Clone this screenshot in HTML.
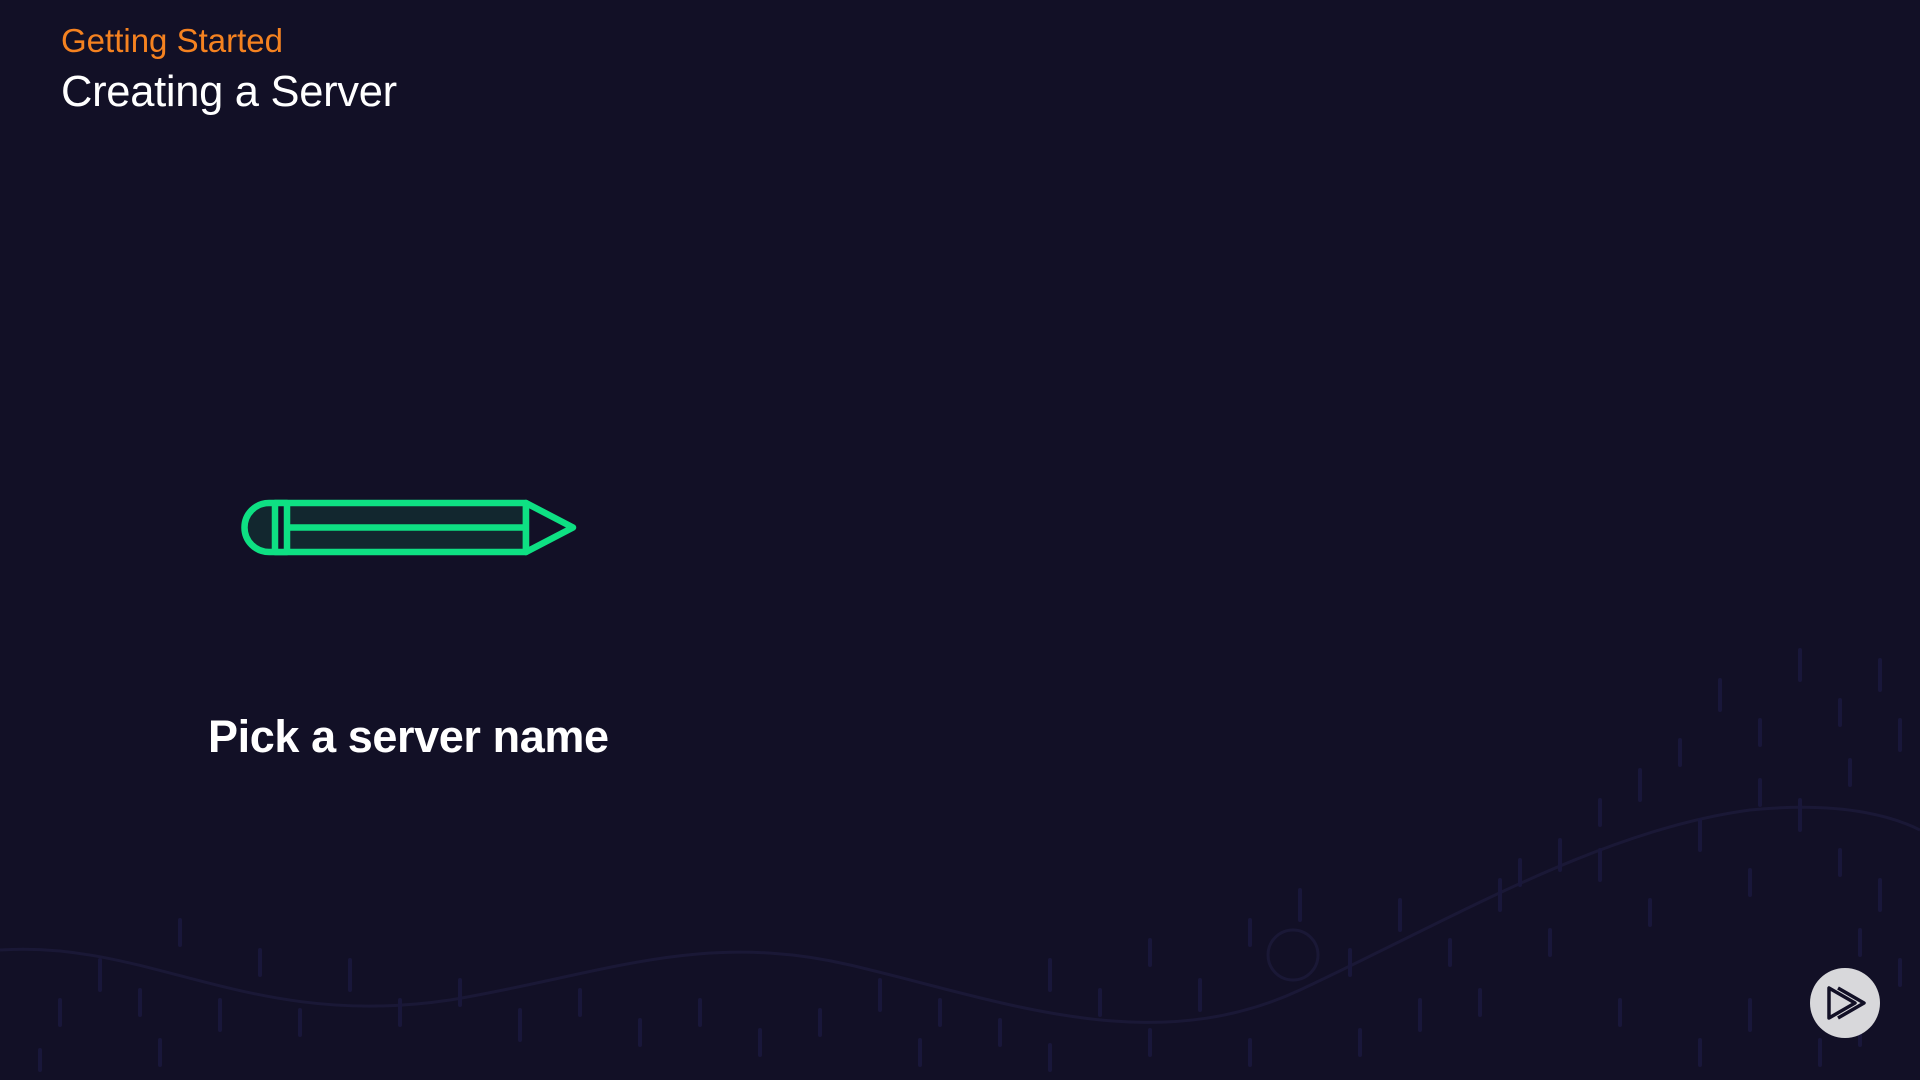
<!DOCTYPE html>
<html><head><meta charset="utf-8"><style>
html,body{margin:0;padding:0;width:1920px;height:1080px;overflow:hidden;background:#121026;font-family:"Liberation Sans",sans-serif}
.t{position:absolute;white-space:nowrap}
</style></head><body>
<svg width="1920" height="1080" style="position:absolute;left:0;top:0">
<g stroke="#1a1836" stroke-width="3" fill="none">
<path d="M0 950 C150 940 250 1030 450 1000 C600 975 700 930 850 965 C1000 1000 1150 1060 1300 990 C1450 920 1600 830 1750 810 C1850 800 1900 820 1920 830"/>
<circle cx="1293" cy="955" r="25"/>
</g>
<g stroke="#19173a" stroke-width="4" stroke-linecap="round">
<path d="M60 1000v25M100 960v30M140 990v25M180 920v25M220 1000v30M260 950v25M300 1010v25M350 960v30M400 1000v25M460 980v25M520 1010v30M580 990v25M640 1020v25M700 1000v25M760 1030v25M820 1010v25M880 980v30M940 1000v25M1000 1020v25M1050 960v30M1100 990v25M1150 940v25M1200 980v30M1250 920v25M1300 890v30M1350 950v25M1400 900v30M1450 940v25M1500 880v30M1550 930v25M1600 850v30M1650 900v25M1700 820v30M1750 870v25M1800 800v30M1850 760v25M1900 720v30M1880 660v30M1840 700v25M1800 650v30M1760 720v25M1720 680v30M1680 740v25M1640 770v30M1600 800v25M1560 840v30M1520 860v25M1480 990v25M1420 1000v30M1360 1030v25M1250 1040v25M1150 1030v25M1050 1045v25M920 1040v25M160 1040v25M40 1050v20M1860 1020v25M1820 1040v25M1900 960v25M1750 1000v30M1700 1040v25M1620 1000v25M1880 880v30M1840 850v25M1760 780v25M1860 930v25"/>
</g>
<g stroke="#0ee083" stroke-width="6.5" stroke-linejoin="round">
<path d="M269 503 H526 V552 H269 A24.5 24.5 0 0 1 269 503 Z" fill="#12272f"/>
<path d="M526 503 L573 527.5 L526 552 Z" fill="#121026"/>
<line x1="526" y1="527.5" x2="288" y2="527.5"/>
<rect x="275" y="503" width="12" height="49" fill="#121026"/>
</g>
<circle cx="1845" cy="1003" r="35" fill="#d8d8db"/>
<g fill="none" stroke="#121026" stroke-width="3.5" stroke-linejoin="round">
<path d="M1829 988 V1018 L1855 1003 Z"/>
<path d="M1838 988 L1864 1003 L1838 1018"/>
</g>
</svg>
<div class="t" style="left:61px;top:22px;font-size:33px;color:#f58220">Getting Started</div>
<div class="t" style="left:61px;top:68px;font-size:43.5px;color:#fff;letter-spacing:-0.3px">Creating a Server</div>
<div class="t" style="left:208px;top:711px;font-size:45px;font-weight:bold;color:#fff;letter-spacing:-0.4px">Pick a server name</div>
</body></html>
